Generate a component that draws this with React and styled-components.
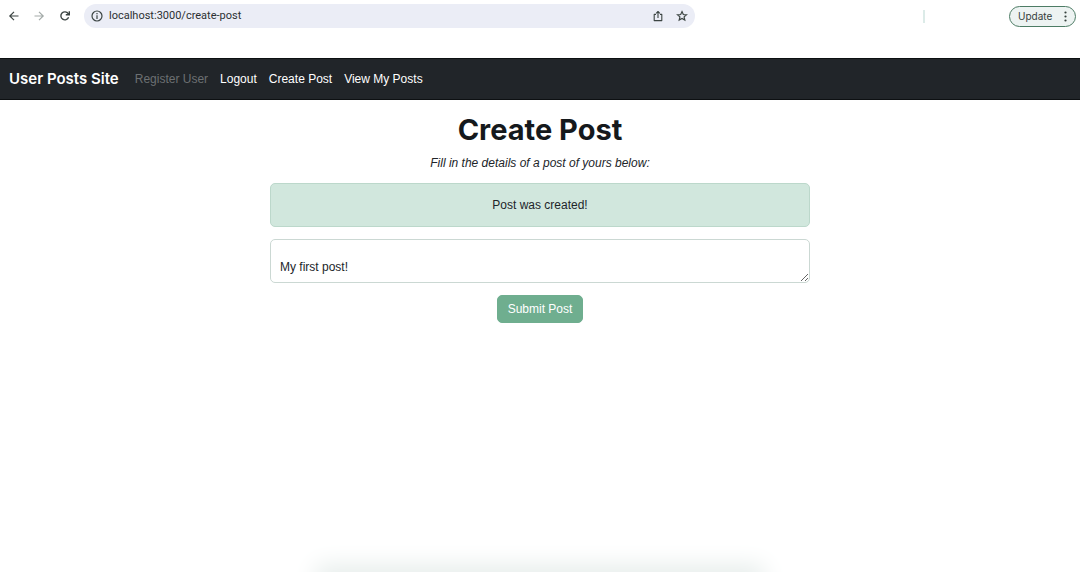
import { useState } from "react";
import styled, { createGlobalStyle } from "styled-components";

const GlobalStyle = createGlobalStyle`
    *, *::before, *::after {
        box-sizing: border-box;
    }

    body {
        margin: 0;
        background: #ffffff;
        color: #212529;
        font-family: "Liberation Sans", Arial, sans-serif;
        font-size: 12px;
        line-height: 18px;
    }

    button, textarea {
        font: inherit;
    }
`

const Page = styled.div`
    display: flex;
    flex-direction: column;
    min-height: 100vh;
    overflow: hidden;
`

const Toolbar = styled.header`
    display: flex;
    align-items: center;
    height: 32px;
    margin-bottom: 26px;
    padding: 0 4px 0 2px;
    font-family: Inter, "Liberation Sans", sans-serif;
`

const IconButton = styled.button`
    display: flex;
    align-items: center;
    justify-content: center;
    width: ${(props) => (props.$narrow ? "24px" : "26px")};
    height: 24px;
    padding: 0;
    border: none;
    background: transparent;
    color: ${(props) => (props.disabled ? "#a3aaa8" : "#3c4543")};
    cursor: pointer;
`

const AddressBar = styled.div`
    display: flex;
    align-items: center;
    flex: 0 1 611px;
    height: 24px;
    margin-left: 6px;
    padding: 0 1px;
    border-radius: 12px;
    background: #ebedf6;
`

const Address = styled.span`
    flex: 1;
    color: #2b3032;
    font-family: Roboto, "Liberation Sans", sans-serif;
    font-size: 11px;
`

const ToolbarEnd = styled.div`
    display: flex;
    align-items: center;
    gap: 84px;
    margin-left: auto;
`

const Divider = styled.span`
    width: 2px;
    height: 13px;
    background: #dcebe8;
`

const UpdateButton = styled.button`
    display: flex;
    align-items: center;
    justify-content: space-between;
    width: 67px;
    height: 21px;
    padding: 0 8px;
    border: 1px solid #4d7c65;
    border-radius: 11px;
    background: #edf3f2;
    color: #35413c;
    font-size: 10px;
    cursor: pointer;
`

const Navbar = styled.nav`
    display: flex;
    align-items: center;
    gap: 12px;
    height: 42px;
    padding: 0 9px;
    border: solid #0d1012;
    border-width: 1px 0;
    background: #212529;
`

const Brand = styled.a`
    margin-right: 4px;
    color: #ffffff;
    font-family: Inter, "Liberation Sans", sans-serif;
    font-size: 15px;
    font-weight: 600;
    text-decoration: none;
`

const NavLink = styled.a`
    color: ${(props) => (props.$muted ? "#6c7072" : "#ffffff")};
    text-decoration: none;
`

const Main = styled.main`
    display: flex;
    flex-direction: column;
    align-items: center;
    width: 50%;
    margin: 0 auto;
    padding-top: 12px;
`

const Title = styled.h1`
    margin: 0 0 6px;
    color: #15191c;
    font-family: Inter, "Liberation Sans", sans-serif;
    font-size: 29px;
    font-weight: 700;
    line-height: 36px;
`

const Subtitle = styled.p`
    margin: 0 0 11px;
    font-style: italic;
`

const Form = styled.form`
    display: flex;
    flex-direction: column;
    align-items: center;
    gap: 12px;
    width: 100%;
`

const Alert = styled.div`
    width: 100%;
    padding: 12px;
    border: 1px solid #bcd8cb;
    border-radius: 5px;
    background: #d1e7dd;
    text-align: center;
`

const PostField = styled.textarea`
    display: block;
    width: 100%;
    padding: 0 9px 6px;
    border: 1px solid #cbd8d3;
    border-radius: 5px;
    background: #ffffff;
    color: #212529;
    overflow: hidden;
    resize: vertical;
`

const SubmitButton = styled.button`
    padding: 4px 10px;
    border: 1px solid #6fae8f;
    border-radius: 5px;
    background: #6fae8f;
    color: #ffffff;
`

const DockShadow = styled.div`
    width: 40%;
    height: 10px;
    margin: auto auto -12px;
    box-shadow: 0 0 24px 8px #e4ebe9;
`

const Icon = ({ size = 14, children }) => (
    <svg
        width={size}
        height={size}
        viewBox="0 0 14 14"
        fill="none"
        stroke="currentColor"
        strokeWidth="1.2"
        aria-hidden="true"
    >
        {children}
    </svg>
)

const BrowserToolbar = () => (
    <Toolbar>
        <IconButton aria-label="Back" $narrow>
            <Icon><path d="M11.5 7H3M7 2.8L2.8 7L7 11.2" /></Icon>
        </IconButton>
        <IconButton aria-label="Forward" disabled>
            <Icon><path d="M2.5 7H11M7 2.8L11.2 7L7 11.2" /></Icon>
        </IconButton>
        <IconButton aria-label="Reload">
            <Icon>
                <path d="M10.6 8.3A4 4 0 1 1 10.2 4.6L11 5.4" strokeWidth="1.4" />
                <path d="M11.3 2.2V5.7H7.8" strokeWidth="1.4" />
            </Icon>
        </IconButton>
        <AddressBar>
            <IconButton aria-label="Site information" $narrow>
                <Icon>
                    <circle cx="7" cy="7" r="5" />
                    <path d="M7 6.3V10M7 4V5.2" />
                </Icon>
            </IconButton>
            <Address>localhost:3000/create-post</Address>
            <IconButton aria-label="Share" $narrow>
                <Icon>
                    <path d="M5 5.4H3.2V11.6H10.8V5.4H9M7 9V2.9M5.2 4.4L7 2.5L8.8 4.4" strokeWidth="1.1" strokeLinejoin="round" />
                </Icon>
            </IconButton>
            <IconButton aria-label="Bookmark" $narrow>
                <Icon>
                    <path d="M7 2.6L8.3 5.5L11.5 5.8L9.1 7.9L9.8 11.1L7 9.4L4.2 11.1L4.9 7.9L2.5 5.8L5.7 5.5Z" />
                </Icon>
            </IconButton>
        </AddressBar>
        <ToolbarEnd>
            <Divider />
            <UpdateButton>
                Update
                <svg width="3" height="11" viewBox="0 0 3 11" fill="currentColor" aria-hidden="true">
                    <circle cx="1.5" cy="1.5" r="1.1" />
                    <circle cx="1.5" cy="5.5" r="1.1" />
                    <circle cx="1.5" cy="9.5" r="1.1" />
                </svg>
            </UpdateButton>
        </ToolbarEnd>
    </Toolbar>
)

const App = () => {
    const [post, setPost] = useState("\nMy first post!")

    return (
        <Page>
            <GlobalStyle />
            <BrowserToolbar />
            <Navbar>
                <Brand href="#home">User Posts Site</Brand>
                <NavLink href="#register" $muted>Register User</NavLink>
                <NavLink href="#logout">Logout</NavLink>
                <NavLink href="#create-post">Create Post</NavLink>
                <NavLink href="#my-posts">View My Posts</NavLink>
            </Navbar>
            <Main>
                <Title>Create Post</Title>
                <Subtitle id="post-hint">Fill in the details of a post of yours below:</Subtitle>
                <Form onSubmit={(e) => e.preventDefault()}>
                    <Alert role="status">Post was created!</Alert>
                    <PostField
                        rows={2}
                        aria-labelledby="post-hint"
                        value={post}
                        onChange={(e) => setPost(e.target.value)}
                    />
                    <SubmitButton type="submit" disabled>Submit Post</SubmitButton>
                </Form>
            </Main>
            <DockShadow />
        </Page>
    )
}

export default App;
